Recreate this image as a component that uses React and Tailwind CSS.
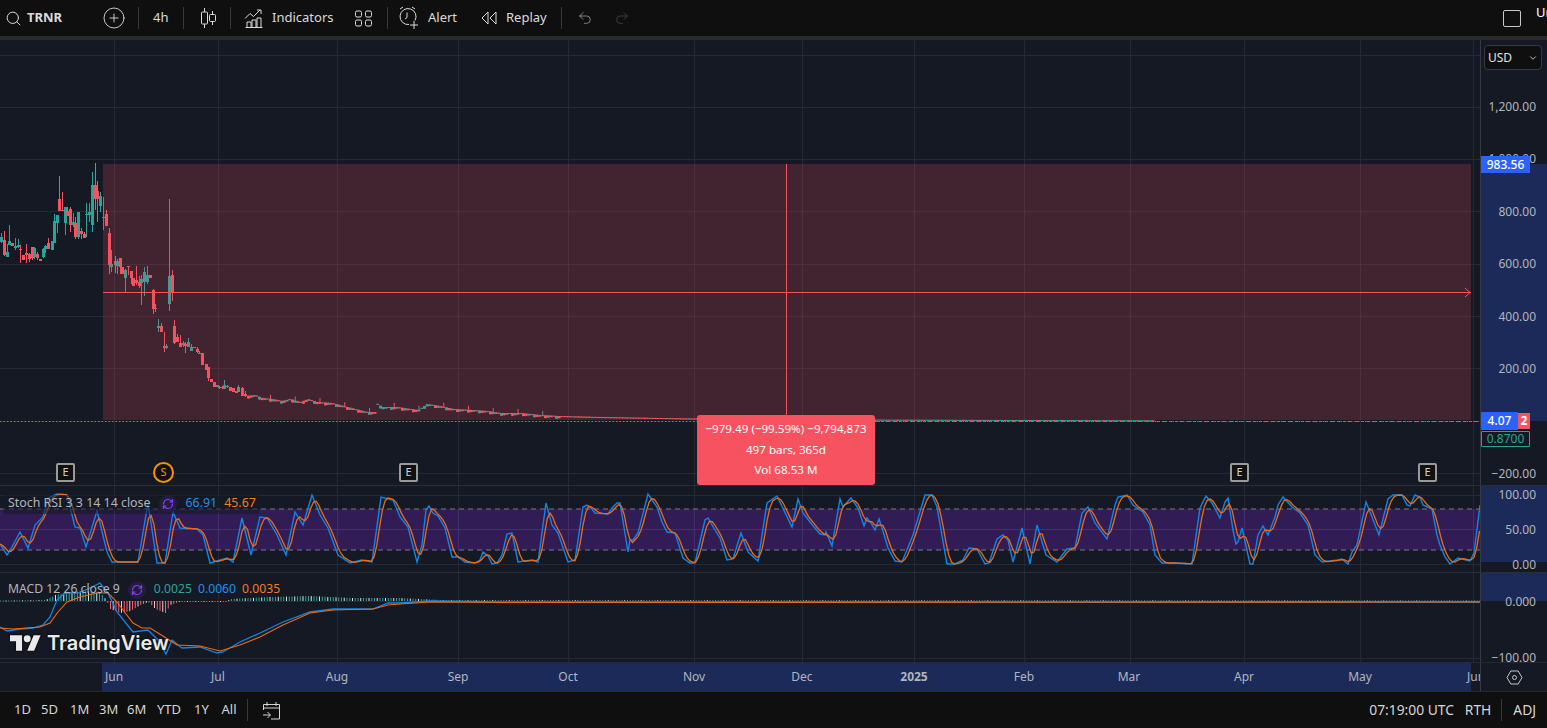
import React from "react";
import { Search, CirclePlus, Undo2, Redo2, RefreshCw, ChevronDown } from "lucide-react";

const RED = "#f7525f";
const TEAL = "#26a69a";
const GRID = "#252934";
const VX = [114, 218, 337, 458, 568, 694, 802, 914, 1024, 1130, 1244, 1360, 1473];

// x, high, low, bodyTop, bodyBottom, up?
const CANDLES = [
  [1,233,243,237,242,1],[4,231,256,240,255,0],[7,244,257,252,257,1],[9,225,245,241,245,1],[12,243,246,243,246,0],[15,238,250,246,248,1],[18,239,248,245,247,1],[20,245,263,249,250,0],[23,255,260,255,260,0],[26,244,263,253,255,0],[29,253,262,254,259,0],[32,247,260,247,258,0],[34,247,259,248,257,1],[37,252,260,254,258,0],[40,259,261,259,261,0],[43,248,258,249,257,1],[45,245,253,246,249,1],[48,238,249,243,249,0],[52,241,250,241,250,1],[54,214,243,221,243,1],[57,215,233,215,223,1],[59,176,211,199,211,0],[62,192,211,210,211,0],[65,207,235,207,223,1],[67,207,216,211,216,0],[70,207,232,209,225,0],[73,213,227,222,225,1],[75,217,239,223,237,0],[78,212,239,212,237,1],[81,228,239,231,234,0],[84,232,238,234,238,0],[86,203,237,214,215,1],[89,203,222,212,215,1],[92,172,232,185,225,1],[95,163,210,185,199,0],[97,181,222,191,199,0],[100,192,212,196,206,1],[103,197,230,217,218,1],[106,210,226,214,226,0],[109,228,274,233,265,0],[111,250,272,264,267,1],[115,256,273,261,265,0],[117,259,274,261,266,1],[120,258,274,258,267,0],[122,267,274,267,274,0],[125,269,292,270,278,1],[128,266,275,266,267,0],[131,271,284,271,278,0],[133,278,286,278,286,0],[136,266,285,280,283,0],[139,276,288,282,286,0],[141,275,305,279,283,1],[144,267,296,272,282,1],[147,266,284,275,282,1],[150,275,278,275,278,0],[153,289,314,290,309,0],[155,304,312,308,309,0],[158,319,332,326,328,1],[161,323,332,326,332,0],[164,332,352,346,348,0],[166,344,349,346,348,1],[169,199,311,276,304,1],[172,270,301,275,292,0],[174,320,344,326,343,0],[177,334,342,337,342,0],[180,335,347,343,347,0],[183,341,347,343,345,1],[185,342,353,344,346,0],[188,338,347,342,347,1],[191,344,351,347,351,1],[194,347,348,347,348,0],[197,347,353,349,352,0],[199,351,354,353,354,0],[202,353,365,353,365,0],[206,364,370,364,370,0],[208,367,381,367,378,0],[211,379,382,379,382,0],[214,382,387,382,387,0],[217,385,387,385,387,1],[219,386,389,387,388,0],[222,386,389,387,388,0],[224,380,389,385,389,1],[227,385,388,386,387,1],[230,387,391,387,391,0],[233,388,392,388,392,0],[236,391,393,391,393,0],[238,385,392,387,392,1],[242,387,396,388,396,0],[245,391,397,394,396,0],
];

const TAIL = [[245,396],[255,395],[262,398],[272,399],[282,401],[290,399],[300,402],[308,399],[317,402],[332,403],[347,407],[367,412],[375,412],[376,403],[382,407],[397,407],[410,409],[418,410],[427,404],[440,406],[453,409],[473,410],[487,411],[500,413],[520,413],[540,415],[558,416],[600,417],[690,418.5],[800,419.5],[1155,420.3]];

const STOCH = [[0,544],[7,555],[12,547],[20,532],[28,548],[35,525],[43,517],[48,498],[57,494],[67,495],[75,527],[80,528],[86,547],[97,511],[107,552],[112,562],[138,562],[148,503],[157,563],[165,563],[173,512],[180,528],[197,529],[203,535],[210,563],[227,558],[233,562],[242,518],[251,555],[260,517],[267,518],[277,535],[286,555],[295,512],[303,525],[312,495],[320,515],[328,528],[338,555],[350,563],[362,560],[372,562],[381,497],[393,500],[400,517],[408,527],[417,562],[422,545],[426,510],[429,506],[433,513],[438,516],[445,528],[452,557],[458,557],[465,562],[475,563],[480,560],[483,552],[488,556],[492,564],[497,563],[502,555],[507,534],[512,533],[518,562],[532,560],[538,562],[546,503],[552,525],[558,533],[568,562],[575,560],[583,507],[587,505],[592,509],[595,513],[608,514],[612,508],[617,503],[620,503],[628,552],[630,540],[633,540],[638,533],[648,494],[657,507],[662,522],[667,532],[675,533],[683,558],[690,563],[695,563],[705,520],[708,518],[715,530],[720,538],[727,560],[733,559],[741,533],[748,552],[758,561],[767,503],[777,496],[792,527],[798,499],[803,513],[810,522],[820,534],[825,535],[826,532],[832,546],[840,499],[843,507],[851,498],[858,508],[864,526],[867,518],[871,523],[875,530],[879,519],[882,528],[888,548],[895,561],[902,562],[913,535],[925,495],[932,495],[937,507],[947,564],[955,564],[963,560],[969,548],[977,549],[985,564],[989,563],[997,539],[1003,535],[1008,540],[1013,562],[1022,528],[1030,564],[1037,525],[1046,555],[1057,562],[1067,549],[1075,548],[1082,513],[1088,507],[1095,523],[1107,539],[1115,505],[1118,497],[1127,495],[1133,505],[1143,512],[1150,525],[1155,555],[1162,563],[1173,563],[1192,564],[1200,508],[1206,496],[1212,503],[1220,518],[1225,502],[1228,498],[1233,530],[1236,544],[1238,542],[1242,528],[1250,564],[1253,564],[1258,535],[1263,526],[1268,535],[1275,517],[1278,505],[1283,497],[1292,507],[1300,513],[1308,525],[1315,555],[1322,562],[1338,560],[1342,559],[1348,564],[1352,552],[1357,545],[1366,502],[1370,512],[1379,535],[1388,499],[1393,495],[1402,495],[1407,505],[1410,506],[1415,495],[1420,497],[1423,505],[1432,509],[1437,535],[1440,545],[1445,557],[1450,564],[1458,558],[1470,561],[1474,553],[1480,505]];

const MACD_BLUE = [[0,627],[7,631],[20,629],[33,628],[43,625],[50,617],[57,600],[65,593],[78,593],[90,588],[100,583],[108,593],[117,612],[133,632],[148,630],[158,640],[166,654],[172,640],[182,648],[200,647],[217,653],[223,652],[240,642],[260,633],[283,622],[310,612],[333,609],[373,609],[388,603],[400,603],[430,601],[500,602],[1480,602]];
const MACD_ORANGE = [[0,628],[13,629],[40,627],[50,623],[58,612],[67,602],[80,597],[97,593],[108,593],[117,602],[133,623],[142,628],[150,628],[163,636],[177,645],[200,646],[220,651],[240,645],[260,637],[283,625],[310,613],[333,610],[373,609],[388,605],[400,604],[430,602],[500,602.5],[1480,602]];

function interp(pts, x) {
  if (x <= pts[0][0]) return pts[0][1];
  for (let i = 1; i < pts.length; i++) {
    if (x <= pts[i][0]) {
      const [a, b] = pts[i - 1];
      const [c, d] = pts[i];
      return b + ((d - b) * (x - a)) / (c - a || 1);
    }
  }
  return pts[pts.length - 1][1];
}
const line = (pts) => pts.map((p) => `${p[0]},${p[1]}`).join(" ");
const orangeStoch = () => {
  const r = [];
  for (let x = 0; x <= 1480; x += 2.75) {
    r.push([x, (interp(STOCH, x) + interp(STOCH, x - 2.75) + interp(STOCH, x - 5.5)) / 3]);
  }
  return r;
};

function VGrid({ y1, y2 }) {
  return VX.map((x) => <line key={x} x1={x + 0.5} x2={x + 0.5} y1={y1} y2={y2} stroke={GRID} />);
}
function HGrid({ ys }) {
  return ys.map((y) => <line key={y} x1={0} x2={1480} y1={y + 0.5} y2={y + 0.5} stroke={GRID} />);
}

function Candle({ c, col }) {
  const [x, hi, lo, top, bot, up] = c;
  const color = col || (up ? TEAL : RED);
  return (
    <g fill={color}>
      <rect x={x} y={hi} width={1} height={Math.max(lo - hi, 1)} />
      <rect x={x - 1} y={top} width={3} height={Math.max(bot - top, 1)} />
    </g>
  );
}

function tailCandles() {
  const out = [];
  let i = 0;
  for (let x = 248; x < 1155; x += 2.75) {
    i++;
    const y = interp(TAIL, x);
    const up = (x < 560 ? (i * 7) % 5 < 2 : x > 875 ? i % 3 !== 0 : i % 7 === 0) || (x > 420 && x < 432) || (x > 376 && x < 386);
    const h = x < 560 ? 1 + ((i * 3) % 4) * 0.6 : 1;
    out.push([x, y - (i % 9 === 0 && x < 560 ? 4 : 0), y + h, y, y + h, up ? 1 : 0]);
  }
  return out;
}

function MainChart() {
  return (
    <svg viewBox="0 40 1480 445" className="block w-[1480px] h-[445px]">
      <HGrid ys={[55, 107, 159, 211, 264, 316, 368, 421, 473]} />
      <VGrid y1={40} y2={485} />
      {CANDLES.map((c, i) => <Candle key={i} c={c} />)}
      {tailCandles().map((c, i) => <Candle key={i} c={c} />)}
      <rect x={103} y={164} width={1368} height={256} fill={RED} fillOpacity={0.2} />
      <line x1={103} x2={1471} y1={292.5} y2={292.5} stroke={RED} />
      <path d="M1465 288l5 4.500-5 4.500" fill="none" stroke={RED} />
      <line x1={786.5} x2={786.5} y1={164} y2={415} stroke={RED} />
      <line x1={0} x2={1480} y1={421.5} y2={421.5} stroke={RED} strokeDasharray="1.5 2" />
      <line x1={875} x2={1480} y1={421.5} y2={421.5} stroke={TEAL} strokeDasharray="3 3" />
    </svg>
  );
}

function StochChart() {
  return (
    <svg viewBox="0 486 1480 86" className="block w-[1480px] h-[86px]">
      <HGrid ys={[495, 564]} />
      <VGrid y1={486} y2={572} />
      <rect x={0} y={509} width={1480} height={41} fill="#321c55" />
      <line x1={0} x2={1480} y1={529.5} y2={529.5} stroke="#47306a" />
      {VX.map((x) => <line key={x} x1={x + 0.5} x2={x + 0.5} y1={509} y2={550} stroke="#43306a" />)}
      <line x1={0} x2={1480} y1={509} y2={509} stroke="#787b86" strokeDasharray="5 4" />
      <line x1={0} x2={1480} y1={550} y2={550} stroke="#787b86" strokeDasharray="5 4" />
      <polyline points={line(STOCH)} fill="none" stroke="#0f86e6" strokeWidth={1.4} />
      <polyline points={line(orangeStoch())} fill="none" stroke="#ef6a12" strokeWidth={1.3} />
      <rect x={3} y={495} width={256} height={19} fill="#151924" fillOpacity={0.55} />
    </svg>
  );
}

function histHeight(x) {
  const t = [[0,0.5],[45,1],[55,6],[70,9],[85,10],[100,8],[106,1],[110,-8],[120,-12],[130,-10],[140,-4],[148,-1],[155,-8],[165,-12],[170,-4],[178,-1],[225,-1],[230,2],[270,4],[310,5],[350,3],[400,3],[440,1],[1480,0.6]];
  return interp(t, x);
}

function MacdChart() {
  const bars = [];
  let i = 0;
  for (let x = 0; x < 1480; x += 2.75) {
    i++;
    const h = histHeight(x);
    const light = i % 3 === 0;
    const color = h >= 0 ? (light ? "#c9ece8" : TEAL) : (light ? "#f8c6cb" : "#ff5f6c");
    bars.push(
      <rect key={i} x={x} y={h >= 0 ? 601 - h : 601} width={1} height={Math.max(Math.abs(h), 1)} fill={x > 500 && i % 2 ? "#8e9099" : color} />
    );
  }
  return (
    <svg viewBox="0 573 1480 89" className="block w-[1480px] h-[89px]">
      <HGrid ys={[601, 658]} />
      <VGrid y1={573} y2={662} />
      {bars}
      <polyline points={line(MACD_BLUE)} fill="none" stroke="#0f86e6" strokeWidth={1.3} />
      <polyline points={line(MACD_ORANGE)} fill="none" stroke="#ef6a12" strokeWidth={1.1} />
    </svg>
  );
}

function Sep({ className }) {
  return <div className={`w-px h-[22px] bg-[#3a3a3a] ${className}`} />;
}

function TopBar() {
  return (
    <div className="h-[36px] bg-[#0f0f0f] flex items-center text-[#dbdbdb] text-[13px] shrink-0">
      <Search className="ml-[5px] w-[17px] h-[17px]" strokeWidth={1.4} />
      <span className="ml-[5px] font-bold text-[13px] w-[35px]">TRNR</span>
      <CirclePlus className="ml-[40px] w-[24px] h-[24px]" strokeWidth={0.9} />
      <Sep className="ml-[12px]" />
      <span className="ml-[14px] w-[16px]">4h</span>
      <Sep className="ml-[14px]" />
      <svg className="ml-[15px] w-[18px] h-[22px]" viewBox="0 0 18 22" fill="none" stroke="currentColor">
        <path d="M5.500 1v4M5.500 17v4M13.500 4v4M13.500 14v4" />
        <rect x="2.500" y="5" width="6" height="12" rx="1" />
        <rect x="10.500" y="7.500" width="6" height="7" rx="1" />
      </svg>
      <Sep className="ml-[13px]" />
      <svg className="ml-[13px] w-[20px] h-[20px]" viewBox="0 0 20 20" fill="none" stroke="currentColor">
        <path d="M1 10.500l5-5 3.500 3L16 2M13 2h4v4" />
        <path d="M1.500 19.500h17M3 19v-5h4v5M8 19v-7h4v7M13 19v-9h4v9" />
      </svg>
      <span className="ml-[8px] w-[63px]">Indicators</span>
      <svg className="ml-[19px] w-[19px] h-[19px]" viewBox="0 0 19 19" fill="none" stroke="currentColor">
        <rect x="1.500" y="2" width="6" height="6" rx="1.500" />
        <rect x="11.500" y="2" width="6" height="6" rx="1.500" />
        <rect x="1.500" y="11" width="6" height="6" rx="1.500" />
        <rect x="11.500" y="11" width="6" height="6" rx="1.500" />
      </svg>
      <Sep className="ml-[14px]" />
      <svg className="ml-[10px] w-[22px] h-[24px]" viewBox="0 0 22 24" fill="none" stroke="currentColor">
        <path d="M11 18.500a8 8 0 1 1 6-4" />
        <path d="M9 6.500v5l-2 1.500" />
        <path d="M2 3l3-2M14 1l3 2" />
        <path d="M16 15v8M12 19h8" />
      </svg>
      <span className="ml-[8px] w-[32px]">Alert</span>
      <svg className="ml-[20px] w-[18px] h-[14px]" viewBox="0 0 18 14" fill="none" stroke="currentColor">
        <path d="M8 1L2 7l6 6zM16 1l-6 6 6 6z" />
      </svg>
      <span className="ml-[8px] w-[43px]">Replay</span>
      <Sep className="ml-[12px]" />
      <Undo2 className="ml-[15px] w-[16px] h-[16px] text-[#b8b8b8]" strokeWidth={1} />
      <Redo2 className="ml-[21px] w-[16px] h-[16px] text-[#555]" strokeWidth={1} />
      <div className="ml-auto w-[18px] h-[17px] border border-[#c9c9c9] rounded-[2px]" />
      <div className="ml-[15px] w-[11px] overflow-hidden self-start pt-[3px] text-white">Un</div>
    </div>
  );
}

function Marker({ x, kind }) {
  if (kind === "S") {
    return (
      <div style={{ left: x - 10 }} className="absolute top-[462px] w-[21px] h-[21px] rounded-full border-2 border-[#f59300] bg-[#111] text-[#f59300] text-[11px] flex items-center justify-center">
        S
      </div>
    );
  }
  return (
    <div style={{ left: x - 9 }} className="absolute top-[463px] w-[19px] h-[19px] rounded-[2px] border-2 border-[#9a9a9a] bg-[#111] text-[#d1d1d1] text-[11px] flex items-center justify-center">
      E
    </div>
  );
}

function PriceAxis({ labels, rowH, pad, className }) {
  return (
    <div style={{ paddingTop: pad }} className={`w-[67px] border-l border-[#363a45] shrink-0 flex flex-col text-[12px] leading-[16px] text-[#b2b5be] ${className}`}>
      {labels.map((l, i) => (
        <div key={l} style={{ height: i === labels.length - 1 ? 16 : rowH }} className="flex items-start justify-end pr-[11px] shrink-0">{l}</div>
      ))}
    </div>
  );
}

function TimeAxis() {
  const ticks = [["Jun",114],["Jul",218],["Aug",337],["Sep",458],["Oct",568],["Nov",694],["Dec",802],["2025",914],["Feb",1024],["Mar",1129],["Apr",1244],["May",1360],["Jun",1476]];
  const W = 40;
  let end = 0;
  const cells = ticks.map(([t, x]) => {
    const m = x - W / 2 - end;
    end = x + W / 2;
    return { t, m };
  });
  return (
    <div className="h-[29px] flex border-t border-[#252934] shrink-0">
      <div className="w-[1480px] overflow-hidden flex items-center text-[12px] text-[#b2b5be] bg-[linear-gradient(to_right,#151924_102px,#1b2a58_102px,#1b2a58_1471px,#151924_1471px)]">
        {cells.map((c, i) => (
          <div
            key={i}
            style={{ marginLeft: c.m }}
            className={`w-[40px] shrink-0 text-center whitespace-nowrap ${c.t === "2025" ? "font-bold" : ""}`}
          >
            {c.t}
          </div>
        ))}
      </div>
      <div className="w-[67px] border-l border-[#363a45] flex items-center justify-center">
        <svg className="w-[17px] h-[15px]" viewBox="0 0 17 15" fill="none" stroke="#c5c5c5">
          <path d="M1 7.500L4.800 1h7.400L16 7.500 12.200 14H4.800z" />
          <circle cx="8.500" cy="7.500" r="2" />
        </svg>
      </div>
    </div>
  );
}

function BottomBar() {
  const ranges = [["1D",14,15],["5D",41,16],["1M",70,17],["3M",99,17],["6M",127,18],["YTD",157,24],["1Y",194,15],["All",221,16]];
  let cur = 0;
  return (
    <div className="h-[37px] bg-[#0f0f0f] border-t border-[#2a2a2a] flex items-center text-[13px] text-[#d6d6d6] shrink-0">
      {ranges.map(([t, x, w]) => {
        const m = x - cur;
        cur = x + w;
        return <span key={t} style={{ marginLeft: m, width: w }} className="text-center shrink-0">{t}</span>;
      })}
      <Sep className="ml-[10px]" />
      <svg className="ml-[14px] w-[19px] h-[19px]" viewBox="0 0 19 19" fill="none" stroke="#d6d6d6">
        <path d="M1.500 9V3.500h16v14.500H9M1.500 7h16M5 1v4M14 1v4" />
        <path d="M1 14h7M5.500 11l3 3-3 3" />
      </svg>
      <span className="ml-auto text-[13.8px]">07:19:00 UTC</span>
      <span className="ml-[11px] text-[13.8px]">RTH</span>
      <Sep className="ml-[10px]" />
      <span className="ml-[11px] mr-[11px] text-[13.8px]">ADJ</span>
    </div>
  );
}

function LegendIcon({ className }) {
  return (
    <span className={`inline-flex w-[18px] h-[18px] rounded-full bg-[#241d42] items-center justify-center ${className}`}>
      <RefreshCw className="w-[12px] h-[12px] text-[#8a3ffc]" strokeWidth={2.4} />
    </span>
  );
}

export default function App() {
  return (
    <div className="relative w-[1547px] h-[728px] overflow-hidden bg-[#151924] flex flex-col font-['Noto_Sans','Open_Sans',sans-serif]">
      <TopBar />
      <div className="h-[4px] bg-[#2a2a2a] shrink-0" />

      <div className="h-[445px] flex shrink-0">
        <MainChart />
        <PriceAxis
          className="bg-[linear-gradient(to_bottom,#151924_124px,#1b2a58_124px,#1b2a58_381px,#151924_381px)]"
          pad={59}
          rowH={52.4}
          labels={["1,200.00", "1,000.00", "800.00", "600.00", "400.00", "200.00", "", "−200.00"]}
        />
      </div>

      <div className="h-[87px] flex border-t border-[#2a2e39] shrink-0">
        <StochChart />
        <PriceAxis
          className="bg-[linear-gradient(to_bottom,#1b2a58_76px,#151924_76px)]"
          pad={1}
          rowH={35}
          labels={["100.00", "50.00", "0.00"]}
        />
      </div>

      <div className="h-[90px] flex border-t border-[#2a2e39] shrink-0">
        <MacdChart />
        <PriceAxis
          className="bg-[linear-gradient(to_bottom,#1b2a58_28px,#151924_28px)]"
          pad={21}
          rowH={56}
          labels={["0.000", "−100.00"]}
        />
      </div>

      <TimeAxis />
      <BottomBar />

      {/* overlays */}
      <div className="absolute left-[697px] top-[415px] w-[178px] h-[70px] bg-[#f7525f] rounded-[3px] text-white text-[11.6px] flex flex-col items-center justify-center leading-[20.5px]">
        <div>−979.49 (−99.59%) −9,794,873</div>
        <div>497 bars, 365d</div>
        <div>Vol 68.53 M</div>
      </div>

      {[65, 408, 1239, 1427].map((x) => <Marker key={x} x={x} kind="E" />)}
      <Marker x={163} kind="S" />

      <div className="absolute left-[8px] top-[494px] h-[19px] flex items-center text-[12.4px] text-[#b2b5be] whitespace-nowrap">
        <span>Stoch RSI 3 3 14 14 close</span>
        <LegendIcon className="ml-[8px]" />
        <span className="ml-[9px] text-[#1e90ef]">66.91</span>
        <span className="ml-[7px] text-[#f57c1f]">45.67</span>
      </div>

      <div className="absolute left-[8px] top-[580px] h-[19px] flex items-center text-[12.2px] text-[#b2b5be] whitespace-nowrap">
        <span>MACD 12 26 close 9</span>
        <LegendIcon className="ml-[8px]" />
        <span className="ml-[8px] text-[#26a69a]">0.0025</span>
        <span className="ml-[6px] text-[#1e90ef]">0.0060</span>
        <span className="ml-[6px] text-[#f57c1f]">0.0035</span>
      </div>

      <div className="absolute left-[10px] top-[630px] flex items-center gap-[6px]">
        <svg viewBox="0 0 36 18" className="w-[31px] h-[16px] drop-shadow-[0_0_1px_#000]" fill="#eaeaea">
          <path d="M14 18H7V7H0V0h14zM28 18h-8l7.500-18h8z" />
          <circle cx="20" cy="4" r="4" />
        </svg>
        <span className="text-[20px] font-semibold text-[#eaeaea] font-['Inter',sans-serif] leading-[26px] [text-shadow:0_0_2px_#000]">TradingView</span>
      </div>

      {/* price axis controls and badges */}
      <div className="absolute left-[1484px] top-[45px] w-[58px] h-[25px] rounded-[4px] border border-[#3a3a3a] bg-[#0f0f0f] text-[#e0e0e0] text-[12px] flex items-center justify-between pl-[3px] pr-[3px]">
        <span>USD</span>
        <ChevronDown className="w-[10px] h-[10px]" />
      </div>
      <div className="absolute left-[1481px] top-[156px] w-[49px] h-[17px] bg-[#2962ff] text-white text-[12px] font-medium flex items-center justify-center">983.56</div>
      <div className="absolute left-[1518px] top-[413px] w-[12px] h-[16px] bg-[#f7525f] text-white text-[12px] font-bold flex items-center justify-center">2</div>
      <div className="absolute left-[1481px] top-[412px] w-[37px] h-[18px] bg-[#2962ff] text-white text-[12px] font-medium flex items-center justify-center">4.07</div>
      <div className="absolute left-[1481px] top-[431px] w-[49px] h-[16px] bg-[#151924] border border-[#26a69a] rounded-[1px] text-[#26a69a] text-[12px] flex items-center justify-center">0.8700</div>
    </div>
  );
}
